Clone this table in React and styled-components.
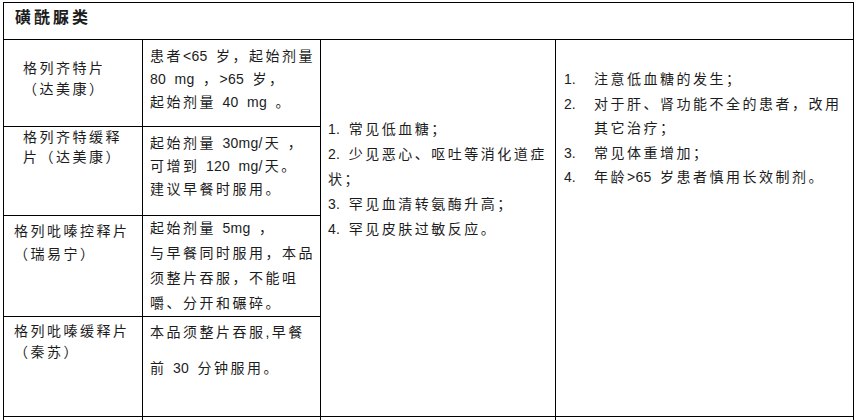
import React from "react";
import styled, { createGlobalStyle } from "styled-components";

const GlobalStyle = createGlobalStyle`
  html, body {
    margin: 0;
    padding: 0;
    background: #ffffff;
    overflow: hidden;
  }
  body {
    font-family: "Liberation Sans", "Noto Sans CJK SC", sans-serif;
    color: #1c1c1c;
  }
`;

const drugs = [
  {
    name: ["格列齐特片", "（达美康）"],
    namePad: [18, 19],
    nameLh: 21,
    dose: ["患者<65 岁，起始剂量", "80 mg ，>65 岁，", "起始剂量 40 mg 。"],
    dosePad: 5,
    doseLh: 23,
    height: 87,
  },
  {
    name: ["格列齐特缓释", "片（达美康）"],
    namePad: [0, 19],
    nameLh: 20,
    dose: ["起始剂量 30mg/天 ，", "可增到 120 mg/天。", "建议早餐时服用。"],
    dosePad: 5,
    doseLh: 23,
    height: 89,
  },
  {
    name: ["格列吡嗪控释片", "（瑞易宁）"],
    namePad: [4, 10],
    nameLh: 23,
    dose: ["起始剂量 5mg ，", "与早餐同时服用，本品", "须整片吞服，不能咀", "嚼、分开和碾碎。"],
    dosePad: 0,
    doseLh: 25,
    height: 101,
  },
  {
    name: ["格列吡嗪缓释片", "（秦苏）"],
    namePad: [4, 10],
    nameLh: 21,
    dose: ["本品须整片吞服,早餐", "前 30 分钟服用。"],
    dosePad: 3,
    doseLh: 24,
    doseGap: 12,
    height: 100,
  },
];

const effects = [
  "1. 常见低血糖；",
  "2. 少见恶心、呕吐等消化道症",
  "状；",
  "3. 罕见血清转氨酶升高；",
  "4. 罕见皮肤过敏反应。",
];

const notes = [
  ["1.", ["注意低血糖的发生；"]],
  ["2.", ["对于肝、肾功能不全的患者，改用", "其它治疗；"]],
  ["3.", ["常见体重增加；"]],
  ["4.", ["年龄>65 岁患者慎用长效制剂。"]],
];

// latin runs are set tighter than the CJK text around them
const renderText = (text) =>
  text.split(/([\x21-\x7e]+)/).map((part, i) =>
    /[\x21-\x7e]/.test(part) ? <Latin key={i}>{part}</Latin> : part
  );

function App() {
  return (
    <>
      <GlobalStyle />
      <Page>
        <Table>
          <colgroup>
            <col style={{ width: 139 }} />
            <col style={{ width: 178 }} />
            <col style={{ width: 235 }} />
            <col style={{ width: 298 }} />
          </colgroup>
          <tbody>
            <tr>
              <TitleCell colSpan={4}>磺酰脲类</TitleCell>
            </tr>
            {drugs.map((d, i) => (
              <Row key={i} $h={d.height}>
                <NameCell $pt={d.namePad[0]} $pl={d.namePad[1]} $lh={d.nameLh}>
                  {d.name.map((line, j) => (
                    <Line key={j}>{line}</Line>
                  ))}
                </NameCell>
                <DoseCell $pt={d.dosePad} $lh={d.doseLh}>
                  {d.dose.map((line, j) => (
                    <Line key={j} $mt={j > 0 ? d.doseGap : 0}>
                      {renderText(line)}
                    </Line>
                  ))}
                </DoseCell>
                {i === 0 && (
                  <>
                    <EffectCell rowSpan={4}>
                      {effects.map((line, j) => (
                        <Line key={j}>{renderText(line)}</Line>
                      ))}
                    </EffectCell>
                    <NoteCell rowSpan={4}>
                      {notes.map(([num, lines]) => (
                        <NoteItem key={num}>
                          <NoteNum>{num}</NoteNum>
                          <div>
                            {lines.map((line, j) => (
                              <Line key={j}>{renderText(line)}</Line>
                            ))}
                          </div>
                        </NoteItem>
                      ))}
                    </NoteCell>
                  </>
                )}
              </Row>
            ))}
            <Row $h={40}>
              <NameCell $pt={3} $pl={10} $lh={21}>
                <Line>格列美脲片</Line>
              </NameCell>
              <DoseCell $pt={3} $lh={23} />
              <EffectCell />
              <NoteCell />
            </Row>
          </tbody>
        </Table>
      </Page>
    </>
  );
}

const Page = styled.div`
  padding: 2px 0 0 3px;
`;

const Table = styled.table`
  border-collapse: collapse;
  table-layout: fixed;
  width: 851px;
  & td {
    border: 1px solid #000;
    vertical-align: top;
    font-size: 14px;
    letter-spacing: 2.5px;
    white-space: nowrap;
    overflow: hidden;
  }
`;

const Row = styled.tr`
  height: ${(p) => p.$h}px;
`;

const TitleCell = styled.td`
  && {
    height: 37px;
    padding: 4px 0 0 11px;
    font-size: 16px;
    font-weight: bold;
    letter-spacing: 3px;
    line-height: 22px;
    box-sizing: border-box;
  }
`;

const Line = styled.div`
  margin-top: ${(p) => p.$mt || 0}px;
`;

const Latin = styled.span`
  letter-spacing: 0.3px;
  margin-right: 2px;
`;

const NameCell = styled.td`
  padding: ${(p) => p.$pt}px 0 0 ${(p) => p.$pl}px;
  line-height: ${(p) => p.$lh}px;
`;

const DoseCell = styled.td`
  padding: ${(p) => p.$pt}px 0 0 7px;
  line-height: ${(p) => p.$lh}px;
`;

const EffectCell = styled.td`
  padding: 77px 0 0 7px;
  line-height: 25px;
`;

const NoteCell = styled.td`
  padding: 27px 0 0 8px;
  line-height: 24.5px;
`;

const NoteItem = styled.div`
  display: flex;
`;

const NoteNum = styled.span`
  width: 30px;
  flex-shrink: 0;
  letter-spacing: 0;
`;

export default App;
